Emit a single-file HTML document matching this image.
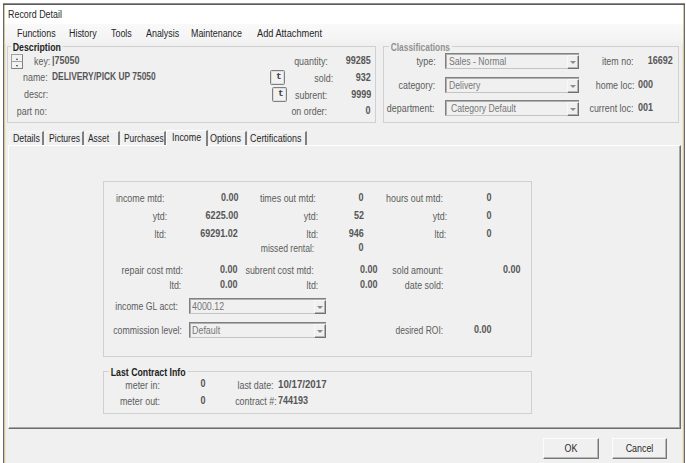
<!DOCTYPE html><html><head><meta charset="utf-8"><title>Record Detail</title><style>
html,body{margin:0;padding:0;}
body{width:686px;height:463px;overflow:hidden;background:#fff;position:relative;
 font-family:"Liberation Sans",sans-serif;font-size:10px;line-height:14px;color:#5c5c5c;}
div,span{position:absolute;box-sizing:border-box;}
.t{white-space:nowrap;transform:scaleX(.89);transform-origin:0 50%;}
.t.r{transform-origin:100% 50%;}
.b{font-weight:bold;color:#565656;transform:scaleX(.84);}
.b.n{transform:scaleX(.90);}
.k{color:#262626;}
.win{background:#f0f0f0;}
.grp{border:1px solid #d0d0d0;}
.leg{background:#f0f0f0;padding:0 2px;}
.combo{border:1px solid #c4c4c4;border-top-color:#808080;border-left-color:#808080;border-right:0;background:#f0f0f0;box-shadow:inset 1px 1px 0 #b0b0b0;}
.combo .arr{right:0px;top:1px;bottom:-1px;width:12px;border:1px solid #f8f8f8;border-right-color:#707070;border-bottom-color:#707070;background:#f0f0f0;box-shadow:inset -1px -1px 0 #b4b4b4;}
.combo .arr:after{content:"";position:absolute;left:2px;top:5px;border:3px solid transparent;border-top:3px solid #8a8a8a;border-bottom:0;}
.btn{border:1px solid #fcfcfc;border-right:1px solid #777;border-bottom:1px solid #777;box-shadow:inset -1px -1px 0 #b8b8b8;background:#f0f0f0;text-align:center;color:#2a2a2a;}
.sp{border:1px solid #a0a0a0;border-right-color:#808080;border-bottom-color:#808080;background:#f2f2f2;}
.sp i{position:absolute;left:3.5px;border:1.5px solid transparent;}
.sp .up{top:3px;border-bottom:2px solid #444;border-top:0;}
.sp .dn{top:3px;border-top:2px solid #444;border-bottom:0;}
.tb{border:1px solid #808080;border-radius:1.5px;background:#f2f2f2;box-shadow:inset 0 0 0 .5px #c8c8c8;}
</style></head><body>
<div class="" style="left:3px;top:3px;width:682px;height:460px;background:linear-gradient(#8c8c8c 0,#8c8c8c 1px,#5c5c5c 1px,#5c5c5c 2px,#666 2px);"></div>
<div class="" style="left:4px;top:5px;width:680px;height:458px;background:#d6c8a2;"></div>
<div class="" style="left:5px;top:5px;width:678px;height:458px;background:#ece6d4;"></div>
<div class="win" style="left:6px;top:5px;width:676px;height:458px;"></div>
<div class="" style="left:5px;top:5px;width:678px;height:19px;background:#fff;"></div>
<span class="t k" style="left:8px;top:7.5px;">Record Detail</span>
<div class="" style="left:5px;top:24px;width:678px;height:20px;background:linear-gradient(#f9f9f9,#f4f4f4 80%,#f0f0f0);"></div>
<span class="t k" style="left:17px;top:26.5px;">Functions</span>
<span class="t k" style="left:69px;top:26.5px;">History</span>
<span class="t k" style="left:111px;top:26.5px;">Tools</span>
<span class="t k" style="left:146px;top:26.5px;">Analysis</span>
<span class="t k" style="left:191px;top:26.5px;">Maintenance</span>
<span class="t k" style="left:257px;top:26.5px;transform:scaleX(0.92);">Add Attachment</span>
<div class="grp" style="left:7px;top:46px;width:369px;height:77px;"></div>
<span class="t b leg" style="left:10.5px;top:41px;color:#222;transform:scaleX(0.875);">Description</span>
<div class="sp" style="left:11px;top:54px;width:12px;height:8px;"><i class="up"></i></div>
<div class="sp" style="left:11px;top:61px;width:12px;height:8px;"><i class="dn"></i></div>
<span class="t r " style="right:636px;top:55px;">key:</span>
<span class="t b n" style="left:52px;top:54px;">|75050</span>
<span class="t r " style="right:638px;top:71px;">name:</span>
<span class="t b" style="left:52px;top:70px;">DELIVERY/PICK UP 75050</span>
<span class="t r " style="right:638px;top:88px;">descr:</span>
<span class="t r " style="right:639px;top:105px;">part no:</span>
<span class="t r " style="right:358.5px;top:55px;">quantity:</span>
<span class="t r b n" style="right:315px;top:54px;">99285</span>
<span class="t r " style="right:353px;top:72px;">sold:</span>
<span class="t r b n" style="right:315px;top:71px;">932</span>
<span class="t r " style="right:358.5px;top:89px;">subrent:</span>
<span class="t r b n" style="right:315px;top:88px;">9999</span>
<span class="t r " style="right:358.5px;top:105px;">on order:</span>
<span class="t r b n" style="right:315px;top:104px;">0</span>
<div class="tb" style="left:270px;top:70px;width:15px;height:15px;"><span class="t b" style="left:5px;top:-1.5px;color:#3a3a3a;transform:none;font-size:9.5px;font-family:'Liberation Mono',monospace;">t</span></div>
<div class="tb" style="left:272px;top:87px;width:15px;height:15px;"><span class="t b" style="left:5px;top:-1.5px;color:#3a3a3a;transform:none;font-size:9.5px;font-family:'Liberation Mono',monospace;">t</span></div>
<div class="grp" style="left:383px;top:46px;width:296px;height:77px;"></div>
<span class="t b leg" style="left:388.5px;top:40.5px;color:#929292;">Classifications</span>
<span class="t r " style="right:250px;top:55px;">type:</span>
<div class="combo" style="left:445px;top:53px;width:134px;height:16px;"><span class="t" style="left:3px;top:.5px;color:#777;transform:scaleX(.865);">Sales - Normal</span><div class="arr"></div></div>
<span class="t r " style="right:251px;top:79px;">category:</span>
<div class="combo" style="left:445px;top:77px;width:134px;height:16px;"><span class="t" style="left:3px;top:.5px;color:#777;transform:scaleX(.865);">Delivery</span><div class="arr"></div></div>
<span class="t r " style="right:252px;top:102px;">department:</span>
<div class="combo" style="left:445px;top:100px;width:134px;height:16px;"><span class="t" style="left:5px;top:.5px;color:#777;transform:scaleX(.865);">Category Default</span><div class="arr"></div></div>
<span class="t r " style="right:52px;top:55px;">item no:</span>
<span class="t r b n" style="right:13.5px;top:54px;">16692</span>
<span class="t r " style="right:52px;top:79px;">home loc:</span>
<span class="t b n" style="left:638px;top:78px;">000</span>
<span class="t r " style="right:53px;top:102px;">current loc:</span>
<span class="t b n" style="left:638px;top:101px;">001</span>
<div class="" style="left:8px;top:145px;width:673px;height:284px;border-top:1px solid #fff;border-left:1px solid #fff;border-right:1px solid #6c6c6c;border-bottom:1px solid #6c6c6c;box-shadow:inset -1px -1px 0 #a8a8a8;"></div>
<div class="" style="left:9px;top:131px;width:35px;height:14px;border-top:1px solid #f8f8f8;border-left:1px solid #f8f8f8;border-right:2px solid #808080;"></div>
<span class="t k" style="left:12.5px;top:131.5px;transform:scaleX(0.88);">Details</span>
<div class="" style="left:45px;top:131px;width:39px;height:14px;border-top:1px solid #f8f8f8;border-left:1px solid #f8f8f8;border-right:2px solid #808080;"></div>
<span class="t k" style="left:48.5px;top:131.5px;transform:scaleX(0.86);">Pictures</span>
<div class="" style="left:85px;top:131px;width:35px;height:14px;border-top:1px solid #f8f8f8;border-left:1px solid #f8f8f8;border-right:2px solid #808080;"></div>
<span class="t k" style="left:88px;top:131.5px;transform:scaleX(0.84);">Asset</span>
<div class="" style="left:121px;top:131px;width:45px;height:14px;border-top:1px solid #f8f8f8;border-left:1px solid #f8f8f8;border-right:2px solid #808080;"></div>
<span class="t k" style="left:123.5px;top:131.5px;transform:scaleX(0.84);">Purchases</span>
<div class="" style="left:166px;top:130px;width:42px;height:16px;border-top:1px solid #fff;border-left:1px solid #fff;border-right:2px solid #808080;background:#f0f0f0;"></div>
<span class="t k" style="left:171.7px;top:130.5px;transform:scaleX(0.89);">Income</span>
<div class="" style="left:209px;top:131px;width:38px;height:14px;border-top:1px solid #f8f8f8;border-left:1px solid #f8f8f8;border-right:2px solid #808080;"></div>
<span class="t k" style="left:210.2px;top:131.5px;transform:scaleX(0.9);">Options</span>
<div class="" style="left:248px;top:131px;width:59px;height:14px;border-top:1px solid #f8f8f8;border-left:1px solid #f8f8f8;border-right:2px solid #808080;"></div>
<span class="t k" style="left:250.4px;top:131.5px;transform:scaleX(0.89);">Certifications</span>
<div class="grp" style="left:103px;top:181px;width:429px;height:176px;"></div>
<span class="t r " style="right:521.5px;top:192px;">income mtd:</span>
<span class="t r b n" style="right:448px;top:191px;">0.00</span>
<span class="t r " style="right:370px;top:192px;">times out mtd:</span>
<span class="t r b n" style="right:322px;top:191px;">0</span>
<span class="t r " style="right:243px;top:192px;">hours out mtd:</span>
<span class="t r b n" style="right:194px;top:191px;">0</span>
<span class="t r " style="right:518.5px;top:210px;">ytd:</span>
<span class="t r b n" style="right:448px;top:209px;">6225.00</span>
<span class="t r " style="right:368px;top:210px;">ytd:</span>
<span class="t r b n" style="right:322px;top:209px;">52</span>
<span class="t r " style="right:239px;top:210px;">ytd:</span>
<span class="t r b n" style="right:194px;top:209px;">0</span>
<span class="t r " style="right:519.5px;top:228px;">ltd:</span>
<span class="t r b n" style="right:448px;top:227px;">69291.02</span>
<span class="t r " style="right:368px;top:228px;">ltd:</span>
<span class="t r b n" style="right:322px;top:227px;">946</span>
<span class="t r " style="right:240px;top:228px;">ltd:</span>
<span class="t r b n" style="right:194px;top:227px;">0</span>
<span class="t r " style="right:371.5px;top:242px;transform:scaleX(0.86);">missed rental:</span>
<span class="t r b n" style="right:322px;top:241px;">0</span>
<span class="t r " style="right:503.5px;top:264px;">repair cost mtd:</span>
<span class="t r b n" style="right:449px;top:263px;">0.00</span>
<span class="t r " style="right:372px;top:264px;">subrent cost mtd:</span>
<span class="t r b n" style="right:308.5px;top:263px;">0.00</span>
<span class="t r " style="right:243px;top:264px;">sold amount:</span>
<span class="t r b n" style="right:166px;top:263px;">0.00</span>
<span class="t r " style="right:505px;top:279px;">ltd:</span>
<span class="t r b n" style="right:449px;top:278px;">0.00</span>
<span class="t r " style="right:368px;top:279px;">ltd:</span>
<span class="t r b n" style="right:308.5px;top:278px;">0.00</span>
<span class="t r " style="right:243px;top:279px;">date sold:</span>
<span class="t r " style="right:508.5px;top:300px;transform:scaleX(0.87);">income GL acct:</span>
<div class="combo" style="left:189px;top:298px;width:137px;height:16px;"><span class="t" style="left:2px;top:.5px;color:#777;">4000.12</span><div class="arr"></div></div>
<span class="t r " style="right:504.5px;top:324px;transform:scaleX(0.87);">commission level:</span>
<div class="combo" style="left:189px;top:322px;width:137px;height:16px;"><span class="t" style="left:2px;top:.5px;color:#777;">Default</span><div class="arr"></div></div>
<span class="t r " style="right:243px;top:324px;transform:scaleX(0.85);">desired ROI:</span>
<span class="t r b n" style="right:195px;top:323px;">0.00</span>
<div class="grp" style="left:103px;top:371px;width:429px;height:43px;"></div>
<span class="t b leg" style="left:108.5px;top:365.5px;color:#222;transform:scaleX(0.875);">Last Contract Info</span>
<span class="t r " style="right:526px;top:378.5px;">meter in:</span>
<span class="t r b n" style="right:480px;top:377px;">0</span>
<span class="t r " style="right:412.5px;top:378.5px;">last date:</span>
<span class="t b n" style="left:278px;top:377.5px;transform:scaleX(0.97);">10/17/2017</span>
<span class="t r " style="right:526px;top:395px;">meter out:</span>
<span class="t r b n" style="right:480px;top:394px;">0</span>
<span class="t r " style="right:409.5px;top:395px;">contract #:</span>
<span class="t b n" style="left:278px;top:394px;">744193</span>
<div class="btn" style="left:543px;top:438px;width:56px;height:21px;"><span class="t" style="left:0;right:0;top:3px;transform-origin:50% 50%;">OK</span></div>
<div class="btn" style="left:612px;top:438px;width:55px;height:21px;"><span class="t" style="left:0;right:0;top:3px;transform-origin:50% 50%;">Cancel</span></div>
</body></html>
